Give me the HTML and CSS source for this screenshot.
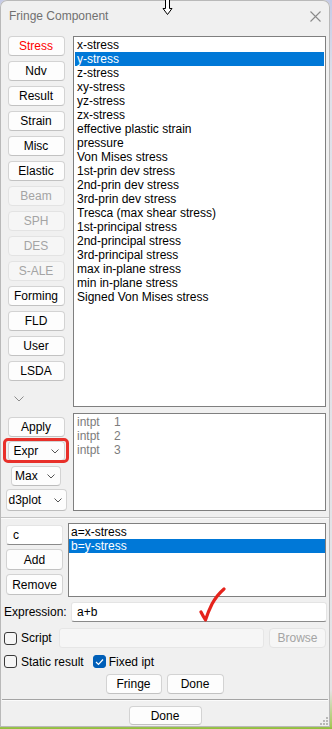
FILE: index.html
```html
<!DOCTYPE html>
<html>
<head>
<meta charset="utf-8">
<title>Fringe Component</title>
<link rel="stylesheet" href="styles.css">
</head>
<body>
<div class="window">
  <div class="titlebar">
    <span class="title">Fringe Component</span>
    <svg class="close" width="11" height="11" viewBox="0 0 11 11"><path d="M0.5 0.5 L10.5 10.5 M10.5 0.5 L0.5 10.5" stroke="#8a8a8a" stroke-width="1.1" fill="none"/></svg>
  </div>

  <div class="upper">
    <div class="leftcol">
      <div class="btn red">Stress</div>
      <div class="btn">Ndv</div>
      <div class="btn">Result</div>
      <div class="btn">Strain</div>
      <div class="btn">Misc</div>
      <div class="btn">Elastic</div>
      <div class="btn disabled">Beam</div>
      <div class="btn disabled">SPH</div>
      <div class="btn disabled">DES</div>
      <div class="btn disabled">S-ALE</div>
      <div class="btn">Forming</div>
      <div class="btn">FLD</div>
      <div class="btn">User</div>
      <div class="btn">LSDA</div>
      <div class="more">
        <svg width="10" height="6" viewBox="0 0 10 6"><polyline points="0.5,0.5 5,5 9.5,0.5" fill="none" stroke="#8c8c8c" stroke-width="1"/></svg>
      </div>
      <div class="btn apply">Apply</div>
      <div class="combo expr"><span>Expr</span><svg width="8" height="5" viewBox="0 0 8 5"><polyline points="0.5,0.5 4,4 7.5,0.5" fill="none" stroke="#555" stroke-width="1"/></svg></div>
      <div class="combo max"><span>Max</span><svg width="8" height="5" viewBox="0 0 8 5"><polyline points="0.5,0.5 4,4 7.5,0.5" fill="none" stroke="#555" stroke-width="1"/></svg></div>
      <div class="combo d3"><span>d3plot</span><svg width="8" height="5" viewBox="0 0 8 5"><polyline points="0.5,0.5 4,4 7.5,0.5" fill="none" stroke="#555" stroke-width="1"/></svg></div>
    </div>

    <div class="rightcol">
      <div class="list main">
        <div class="row">x-stress</div>
        <div class="row sel">y-stress</div>
        <div class="row">z-stress</div>
        <div class="row">xy-stress</div>
        <div class="row">yz-stress</div>
        <div class="row">zx-stress</div>
        <div class="row">effective plastic strain</div>
        <div class="row">pressure</div>
        <div class="row">Von Mises stress</div>
        <div class="row">1st-prin dev stress</div>
        <div class="row">2nd-prin dev stress</div>
        <div class="row">3rd-prin dev stress</div>
        <div class="row">Tresca (max shear stress)</div>
        <div class="row">1st-principal stress</div>
        <div class="row">2nd-principal stress</div>
        <div class="row">3rd-principal stress</div>
        <div class="row">max in-plane stress</div>
        <div class="row">min in-plane stress</div>
        <div class="row">Signed Von Mises stress</div>
      </div>
      <div class="list ipt">
        <div class="row"><span class="ip">intpt</span>1</div>
        <div class="row"><span class="ip">intpt</span>2</div>
        <div class="row"><span class="ip">intpt</span>3</div>
      </div>
    </div>
  </div>

  <div class="sep"></div>

  <div class="exprarea">
    <div class="exleft">
      <div class="textbox cbox">c</div>
      <div class="btn add">Add</div>
      <div class="btn add last">Remove</div>
    </div>
    <div class="list exlist">
      <div class="row">a=x-stress</div>
      <div class="row sel">b=y-stress</div>
    </div>
  </div>

  <div class="exprrow">
    <span class="exlabel">Expression:</span>
    <div class="textbox exinput">a+b</div>
  </div>

  <div class="scriptrow">
    <span class="check"></span>
    <span class="cklabel scriptlabel">Script</span>
    <div class="textbox disabledbox"></div>
    <div class="btn disabled browse">Browse</div>
  </div>

  <div class="staticrow">
    <span class="check"></span>
    <span class="cklabel">Static result</span>
    <span class="check checked fixed"><svg width="9" height="8" viewBox="0 0 9 8"><polyline points="1,4 3.5,6.5 8,1.5" fill="none" stroke="#fff" stroke-width="1.2"/></svg></span>
    <span class="cklabel fixedlabel">Fixed ipt</span>
  </div>

  <div class="btnrow">
    <div class="btn fringe">Fringe</div>
    <div class="btn done1">Done</div>
  </div>

  <div class="sep sep2"></div>

  <div class="donerow">
    <div class="btn done2">Done</div>
  </div>

  <div class="redbox"></div>
  <svg class="redcheck" width="30" height="38" viewBox="0 0 30 38"><path d="M3 25 Q5 29 7.5 33 Q10 25 14 17 Q19 8 26 2" fill="none" stroke="#e5231c" stroke-width="3.2" stroke-linecap="round" stroke-linejoin="round"/></svg>
  <svg class="grip" width="10" height="10" viewBox="0 0 10 10"><g fill="#b8b8b8"><rect x="7" y="1" width="2" height="2"/><rect x="4" y="4" width="2" height="2"/><rect x="7" y="4" width="2" height="2"/><rect x="1" y="7" width="2" height="2"/><rect x="4" y="7" width="2" height="2"/><rect x="7" y="7" width="2" height="2"/></g></svg>
</div>
<svg class="cursor" width="11" height="16" viewBox="0 0 11 16"><polygon points="3.5,-1 7.5,-1 7.5,8.5 10,8.5 5.5,14.5 1,8.5 3.5,8.5" fill="#fff" stroke="#000" stroke-width="1"/></svg>
</body>
</html>
```
FILE: styles.css
```css
* { box-sizing: border-box; }
html, body { margin: 0; padding: 0; }
body {
  width: 332px;
  height: 729px;
  overflow: hidden;
  position: relative;
  background: linear-gradient(to bottom, #c6cbe6 0, #dfe1ea 80px, #e4e4e6 690px, #a6c85a 726px, #8dbb3c 729px);
  font-family: "Liberation Sans", Arial, sans-serif;
  font-size: 12px;
  color: #000;
}
.window {
  position: relative;
  width: 330px;
  height: 727px;
  background: #f0f0f0;
  border-radius: 7px 7px 0 0;
  box-shadow: inset 0 0 0 1px #b9b9b9;
  display: flex;
  flex-direction: column;
}
.titlebar {
  height: 30px;
  flex: none;
  display: flex;
  align-items: center;
  justify-content: space-between;
  padding: 2px 9px 0 9px;
  color: #707070;
  font-size: 12px;
}
.upper { display: flex; height: 485px; flex: none; }
.leftcol {
  width: 66px;
  padding: 6px 0 0 6px;
  display: flex;
  flex-direction: column;
  align-items: center;
}
.btn {
  height: 20px;
  width: 57px;
  flex: none;
  display: flex;
  align-items: center;
  justify-content: center;
  background: #fdfdfd;
  border: 1px solid #d3d3d3;
  border-bottom-color: #c2c2c2;
  border-radius: 4px;
  margin-bottom: 5px;
  white-space: nowrap;
}
.btn.red { color: #ff0000; }
.btn.disabled { color: #a4a4a4; background: #f6f6f6; border-color: #e3e3e3; }
.more { height: 36px; width: 100%; flex: none; padding: 15px 0 0 8px; margin-top: -5px; }
.more svg { display: block; }
.btn.apply { margin-bottom: 4px; }
.combo {
  height: 20px;
  flex: none;
  display: flex;
  align-items: center;
  justify-content: space-between;
  background: #fdfdfd;
  border: 1px solid #d3d3d3;
  border-bottom-color: #bdbdbd;
  border-radius: 4px;
}
.combo svg { display: block; }
.combo.expr { width: 57px; padding: 0 5px 0 5px; margin-bottom: 5px; }
.combo.max { width: 50px; padding: 0 5px 0 3px; margin-bottom: 3px; }
.combo.d3 { width: 61px; height: 22px; padding: 0 4px 0 2px; }

.rightcol {
  margin-left: 7px;
  width: 253px;
  padding-top: 6px;
  display: flex;
  flex-direction: column;
}
.list { background: #fff; border: 1px solid #7f7f7f; flex: none; }
.row { height: 14px; line-height: 14px; padding-left: 2px; white-space: pre; }
.row.sel { background: #0078d7; color: #fff; }
.main { height: 371px; padding: 1px; }
.ipt { height: 98px; margin-top: 6px; padding: 1px; color: #7c7c7c; }
.ip { display: inline-block; width: 37px; }

.sep { height: 2px; flex: none; margin: 2px 1px 0; border-top: 1px solid #c4c4c4; border-bottom: 1px solid #fbfbfb; }

.exprarea { display: flex; padding: 4px 0 0 6px; flex: none; }
.exleft { width: 57px; display: flex; flex-direction: column; }
.textbox {
  background: #fff;
  border: 1px solid #e4e4e4;
  border-bottom-color: #8a8a8a;
  border-radius: 3px;
  height: 20px;
  line-height: 18px;
  padding-left: 6px;
}
.cbox { margin-top: 2px; margin-bottom: 4px; }
.btn.add { width: 57px; height: 21px; margin-bottom: 4px; }
.btn.add.last { margin-bottom: 0; }
.exlist { margin-left: 5px; width: 258px; height: 74px; padding: 1px 0; }

.exprrow { display: flex; align-items: center; height: 20px; margin-top: 5px; flex: none; }
.exlabel { width: 71px; padding-left: 4px; }
.exinput { width: 256px; padding-left: 5px; }

.scriptrow { display: flex; align-items: center; height: 20px; margin-top: 6px; flex: none; padding-left: 4px; }
.check {
  width: 13px;
  height: 13px;
  flex: none;
  border: 1px solid #3a3a3a;
  border-radius: 3px;
  background: #f6f6f6;
  display: flex;
  align-items: center;
  justify-content: center;
}
.check.checked { background: #005fb8; border-color: #005fb8; }
.check svg { display: block; }
.cklabel { margin-left: 4px; }
.scriptlabel { width: 38px; }
.disabledbox { width: 205px; background: #f6f6f6; border-color: #e6e6e6; }
.btn.browse { margin: 0 0 0 5px; width: 57px; }

.staticrow { display: flex; align-items: center; height: 19px; margin-top: 4px; flex: none; padding-left: 4px; }
.check.fixed { margin-left: 9px; }
.fixedlabel { margin-left: 3px; }

.btnrow { display: flex; justify-content: center; gap: 5px; margin-top: 3px; padding-right: 1px; flex: none; }
.btn.fringe { width: 56px; margin: 0; }
.btn.done1 { width: 57px; margin: 0; }
.sep2 { margin: 5px 2px 0; border-top-color: #a4a4a4; }
.donerow { display: flex; justify-content: center; margin-top: 5px; flex: none; }
.btn.done2 { width: 73px; height: 19px; margin: 0; }

.redbox {
  position: absolute;
  left: 3px;
  top: 438px;
  width: 66px;
  height: 25px;
  border: 3px solid #e8302a;
  border-radius: 5px;
}
.redcheck { position: absolute; left: 198px; top: 587px; }
.grip { position: absolute; right: 1px; bottom: 1px; }
.cursor { position: absolute; left: 162px; top: 0; }
```
